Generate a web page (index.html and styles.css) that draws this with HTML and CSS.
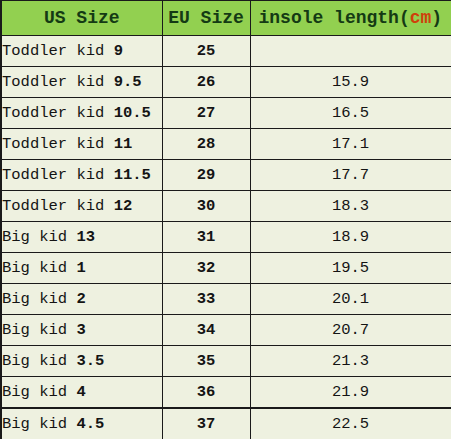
FILE: index.html
```html
<!DOCTYPE html>
<html>
<head>
<meta charset="utf-8">
<link rel="stylesheet" href="styles.css">
</head>
<body>
<table class="size-table">
  <colgroup>
    <col class="c-us">
    <col class="c-eu">
    <col class="c-len">
  </colgroup>
  <thead>
    <tr class="head">
      <th>US Size</th>
      <th>EU Size</th>
      <th>insole length(<span class="unit">cm</span>)</th>
    </tr>
  </thead>
  <tbody>
    <tr><td class="us">Toddler kid <b>9</b></td><td class="num">25</td><td class="num"></td></tr>
    <tr><td class="us">Toddler kid <b>9.5</b></td><td class="num">26</td><td class="len">15.9</td></tr>
    <tr><td class="us">Toddler kid <b>10.5</b></td><td class="num">27</td><td class="len">16.5</td></tr>
    <tr><td class="us">Toddler kid <b>11</b></td><td class="num">28</td><td class="len">17.1</td></tr>
    <tr><td class="us">Toddler kid <b>11.5</b></td><td class="num">29</td><td class="len">17.7</td></tr>
    <tr><td class="us">Toddler kid <b>12</b></td><td class="num">30</td><td class="len">18.3</td></tr>
    <tr><td class="us">Big kid <b>13</b></td><td class="num">31</td><td class="len">18.9</td></tr>
    <tr><td class="us">Big kid <b>1</b></td><td class="num">32</td><td class="len">19.5</td></tr>
    <tr><td class="us">Big kid <b>2</b></td><td class="num">33</td><td class="len">20.1</td></tr>
    <tr><td class="us">Big kid <b>3</b></td><td class="num">34</td><td class="len">20.7</td></tr>
    <tr><td class="us">Big kid <b>3.5</b></td><td class="num">35</td><td class="len">21.3</td></tr>
    <tr><td class="us">Big kid <b>4</b></td><td class="num">36</td><td class="len">21.9</td></tr>
    <tr class="last"><td class="us">Big kid <b>4.5</b></td><td class="num">37</td><td class="len">22.5</td></tr>
  </tbody>
</table>
</body>
</html>
```
FILE: styles.css
```css
html, body {
  margin: 0;
  padding: 0;
  background: #eef1e0;
}
.size-table {
  border-collapse: collapse;
  table-layout: fixed;
  width: 451px;
  font-family: "Liberation Mono", "DejaVu Sans Mono", monospace;
  color: #141414;
  background: #eef1e0;
}
.c-us { width: 161px; }
.c-eu { width: 88px; }
.c-len { width: 202px; }
.size-table th,
.size-table td {
  border: 1px solid #1a1a1a;
  padding: 0;
  white-space: nowrap;
  overflow: hidden;
}
.size-table th:first-child,
.size-table td:first-child {
  border-left: 2px solid #1a1a1a;
}
.size-table th:last-child,
.size-table td:last-child {
  border-right: 3px solid #1a1a1a;
}
.head th {
  height: 34px;
  background: #92d050;
  color: #143a14;
  font-size: 18px;
  font-weight: bold;
  text-align: center;
  border-top: 1px solid #1a1a1a;
}
.head th:last-child {
  text-align: left;
  padding-left: 8px;
}
.unit {
  color: #d0400a;
}
.size-table td {
  height: 30px;
  font-size: 15.5px;
}
.us {
  padding-left: 4px;
  text-align: left;
}
.us b {
  font-weight: bold;
}
.num {
  text-align: center;
  font-weight: bold;
  font-size: 16px;
}
.len {
  text-align: center;
  font-size: 16px;
}
.last td {
  border-top: 2px solid #1a1a1a;
  border-bottom: 2px solid #1a1a1a;
}
```
